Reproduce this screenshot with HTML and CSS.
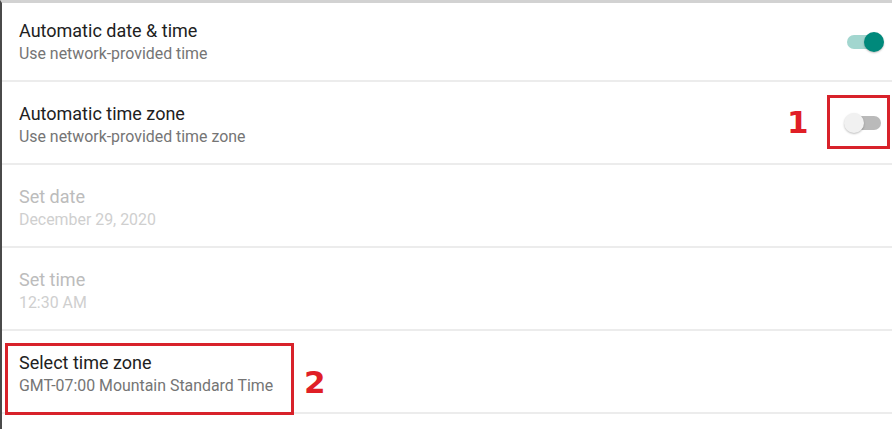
FILE: index.html
```html
<!DOCTYPE html>
<html lang="en">
<head>
<meta charset="utf-8">
<title>Date &amp; time</title>
<link rel="stylesheet" href="styles.css">
</head>
<body>
<div class="screen">
  <div class="row row-first">
    <div class="text">
      <div class="title">Automatic date &amp; time</div>
      <div class="summary">Use network-provided time</div>
    </div>
    <div class="switch switch-on"><span class="track"></span><span class="thumb"></span></div>
  </div>
  <div class="row">
    <div class="text">
      <div class="title">Automatic time zone</div>
      <div class="summary">Use network-provided time zone</div>
    </div>
    <div class="switch switch-off"><span class="track"></span><span class="thumb"></span></div>
  </div>
  <div class="row row-disabled">
    <div class="text">
      <div class="title">Set date</div>
      <div class="summary">December 29, 2020</div>
    </div>
  </div>
  <div class="row row-disabled">
    <div class="text">
      <div class="title">Set time</div>
      <div class="summary">12:30 AM</div>
    </div>
  </div>
  <div class="row">
    <div class="text">
      <div class="title">Select time zone</div>
      <div class="summary">GMT-07:00 Mountain Standard Time</div>
    </div>
  </div>

  <div class="mark mark-switch"></div>
  <div class="mark-label label-1">1</div>
  <div class="mark mark-zone"></div>
  <div class="mark-label label-2">2</div>
</div>
</body>
</html>
```

FILE: styles.css
```css
html, body {
  margin: 0;
  padding: 0;
  background: #ffffff;
}

.screen {
  position: relative;
  width: 890px;
  height: 426px;
  border-left: 2px solid #4a4a4a;
  border-top: 3px solid #d2d2d2;
  background: #ffffff;
  font-family: Roboto, "Noto Sans", sans-serif;
  overflow: hidden;
}

.row {
  display: flex;
  align-items: center;
  height: 81px;
  border-bottom: 2px solid #ececec;
}

.row-first {
  height: 77px;
}

.text {
  flex: 1;
  align-self: flex-start;
  padding-top: 21px;
  padding-left: 17px;
}

.row-first .text {
  padding-top: 17px;
}

.title {
  font-size: 18px;
  line-height: 22px;
  color: #212121;
}

.summary {
  margin-top: 1px;
  font-size: 15.9px;
  line-height: 22px;
  color: #757575;
}

.row-disabled .title {
  color: #bcbcbc;
}

.row-disabled .summary {
  color: #cfcfcf;
}

.switch {
  position: relative;
  width: 40px;
  height: 24px;
  margin-right: 8px;
}

.track {
  position: absolute;
  left: 3px;
  right: 3px;
  top: 5px;
  height: 14px;
  border-radius: 7px;
}

.thumb {
  position: absolute;
  top: 2px;
  width: 20px;
  height: 20px;
  border-radius: 50%;
  box-shadow: 0 1px 2px rgba(0, 0, 0, 0.25);
}

.switch-on .track {
  background: #a2d6cf;
}

.switch-on .thumb {
  right: 0;
  background: #00897b;
}

.switch-off .track {
  background: #bababa;
}

.switch-off .thumb {
  left: 0;
  background: #f1f1f1;
}

.mark {
  position: absolute;
  box-sizing: border-box;
  border: 3px solid #d8222a;
}

.mark-switch {
  left: 825px;
  top: 92px;
  width: 63px;
  height: 54px;
}

.mark-zone {
  left: 3px;
  top: 340px;
  width: 289px;
  height: 72px;
}

.mark-label {
  position: absolute;
  font-family: "DejaVu Sans", sans-serif;
  font-weight: bold;
  font-size: 31px;
  line-height: 32px;
  color: #e01f26;
}

.label-1 {
  left: 785px;
  top: 103px;
}

.label-2 {
  left: 302px;
  top: 363px;
}
```
